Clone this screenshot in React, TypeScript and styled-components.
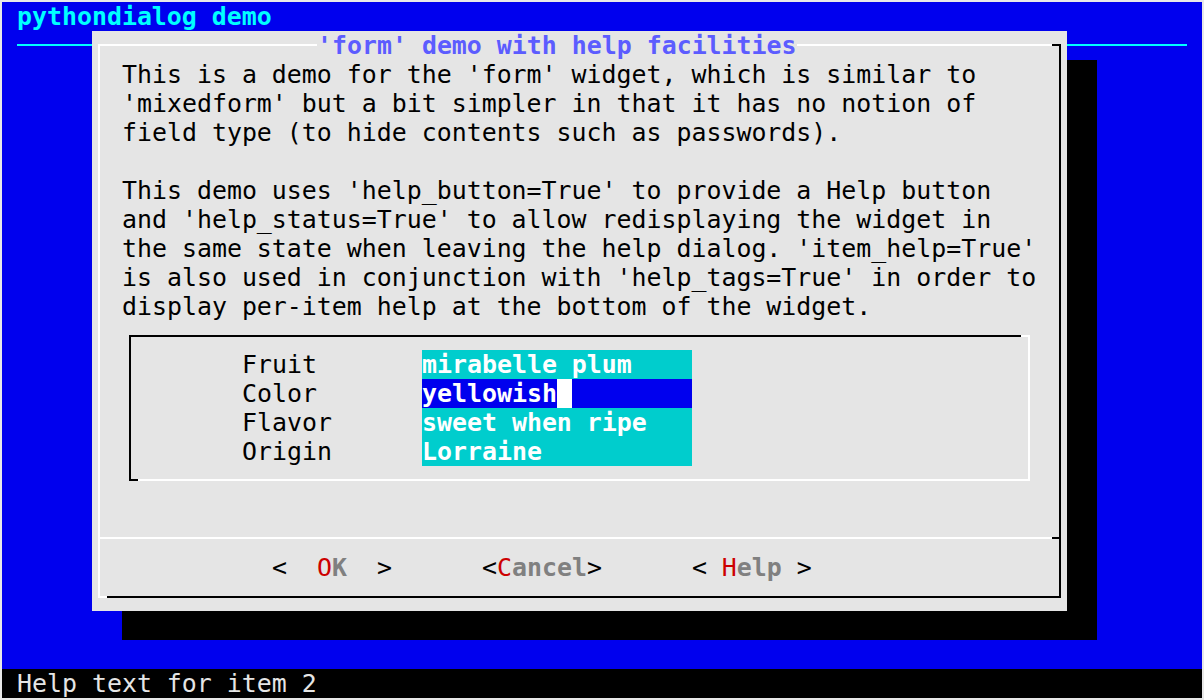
import { Fragment } from "react";
import styled, { createGlobalStyle } from "styled-components";

const GlobalStyle = createGlobalStyle`
  html, body {
    margin: 0;
    padding: 0;
    background: #e8e8e8;
  }
  body {
    padding: 2px;
  }
`;

const Screen = styled.div`
  width: 1200px;
  height: 696px;
  background: #0000ee;
  font-family: "DejaVu Sans Mono", "Liberation Mono", monospace;
  font-size: 24.9px;
  line-height: 29px;
  white-space: pre;
  display: flex;
  flex-direction: column;
  overflow: hidden;
`;

const BackTitle = styled.div`
  height: 29px;
  padding-left: 15px;
  color: #00ffff;
  font-weight: bold;
`;

// the backtitle underline runs behind the dialog
const Desktop = styled.div`
  height: 638px;
  padding-left: 90px;
  background: linear-gradient(#00ffff, #00ffff) no-repeat 15px 13px / 1170px 2px;
`;

const Dialog = styled.div`
  width: 975px;
  height: 580px;
  box-sizing: border-box;
  padding: 13px 6px;
  background: #e5e5e5;
  box-shadow: 30px 29px 0 #000;
`;

const Box = styled.div<{ $light: string; $dark: string }>`
  position: relative;
  box-sizing: border-box;
  border: 2px solid;
  border-color: ${({ $light, $dark }) => `${$light} ${$dark} ${$dark} ${$light}`};

  &::before {
    content: "";
    position: absolute;
    top: -2px;
    right: -2px;
    width: 9px;
    height: 2px;
    background: ${({ $dark }) => $dark};
  }
  &::after {
    content: "";
    position: absolute;
    bottom: -2px;
    left: -2px;
    width: 9px;
    height: 2px;
    background: ${({ $light }) => $light};
  }
`;

const Frame = styled(Box)`
  height: 100%;
  display: flex;
  flex-direction: column;
  align-items: flex-start;
`;

const DialogTitle = styled.div`
  margin: -15px 0 0 217px;
  background: #e5e5e5;
  color: #5c5cff;
  font-weight: bold;
`;

const BodyText = styled.div`
  padding-left: 22px;
  color: #000;
`;

const FormBox = styled(Box)`
  margin: 14px 0 0 29px;
  width: 901px;
  height: 146px;
`;

const FormGrid = styled.div`
  display: grid;
  grid-template-columns: 180px 270px;
  grid-auto-rows: 29px;
  padding: 13px 0 0 111px;
`;

const FieldLabel = styled.span`
  color: #000;
`;

const FieldInput = styled.span<{ $active?: boolean }>`
  background: ${({ $active }) => ($active ? "#0000ee" : "#00cdcd")};
  color: #fff;
  font-weight: bold;
`;

const Cursor = styled.span`
  background: #fff;
`;

const Separator = styled.div`
  align-self: stretch;
  margin-top: 56px;
  height: 2px;
  background: linear-gradient(to right, #fff calc(100% - 7px), #000 calc(100% - 7px));
`;

const ButtonRow = styled.div`
  display: flex;
  gap: 90px;
  margin-top: 14px;
  padding-left: 172px;
  height: 29px;
`;

const Button = styled.span`
  color: #000;
`;

const HotKey = styled.span`
  color: #cd0000;
`;

const ButtonLabel = styled.span`
  color: #808080;
  font-weight: bold;
`;

const StatusBar = styled.div`
  height: 29px;
  padding-left: 15px;
  background: #000;
  color: #e5e5e5;
`;

const body = [
  "This is a demo for the 'form' widget, which is similar to",
  "'mixedform' but a bit simpler in that it has no notion of",
  "field type (to hide contents such as passwords).",
  "",
  "This demo uses 'help_button=True' to provide a Help button",
  "and 'help_status=True' to allow redisplaying the widget in",
  "the same state when leaving the help dialog. 'item_help=True'",
  "is also used in conjunction with 'help_tags=True' in order to",
  "display per-item help at the bottom of the widget.",
];

const FIELD_WIDTH = 18;

const fields = [
  { label: "Fruit", value: "mirabelle plum" },
  { label: "Color", value: "yellowish", active: true },
  { label: "Flavor", value: "sweet when ripe" },
  { label: "Origin", value: "Lorraine" },
];

const buttons = [
  { pre: "<  ", hot: "O", rest: "K", post: "  >" },
  { pre: "<", hot: "C", rest: "ancel", post: ">" },
  { pre: "< ", hot: "H", rest: "elp", post: " >" },
];

const App = () => {
  return (
    <>
      <GlobalStyle />
      <Screen>
        <BackTitle>pythondialog demo</BackTitle>
        <Desktop>
          <Dialog>
            <Frame $light="#fff" $dark="#000">
              <DialogTitle>'form' demo with help facilities</DialogTitle>
              <BodyText>{body.join("\n")}</BodyText>
              <FormBox $light="#000" $dark="#fff">
                <FormGrid>
                  {fields.map((f) => (
                    <Fragment key={f.label}>
                      <FieldLabel>{f.label}</FieldLabel>
                      <div>
                        {f.active ? (
                          <FieldInput $active>
                            {f.value}
                            <Cursor> </Cursor>
                            {" ".repeat(FIELD_WIDTH - f.value.length - 1)}
                          </FieldInput>
                        ) : (
                          <FieldInput>{f.value.padEnd(FIELD_WIDTH, " ")}</FieldInput>
                        )}
                      </div>
                    </Fragment>
                  ))}
                </FormGrid>
              </FormBox>
              <Separator />
              <ButtonRow>
                {buttons.map((b) => (
                  <Button key={b.hot}>
                    {b.pre}
                    <HotKey>{b.hot}</HotKey>
                    <ButtonLabel>{b.rest}</ButtonLabel>
                    {b.post}
                  </Button>
                ))}
              </ButtonRow>
            </Frame>
          </Dialog>
        </Desktop>
        <StatusBar>Help text for item 2</StatusBar>
      </Screen>
    </>
  );
};

export default App;
